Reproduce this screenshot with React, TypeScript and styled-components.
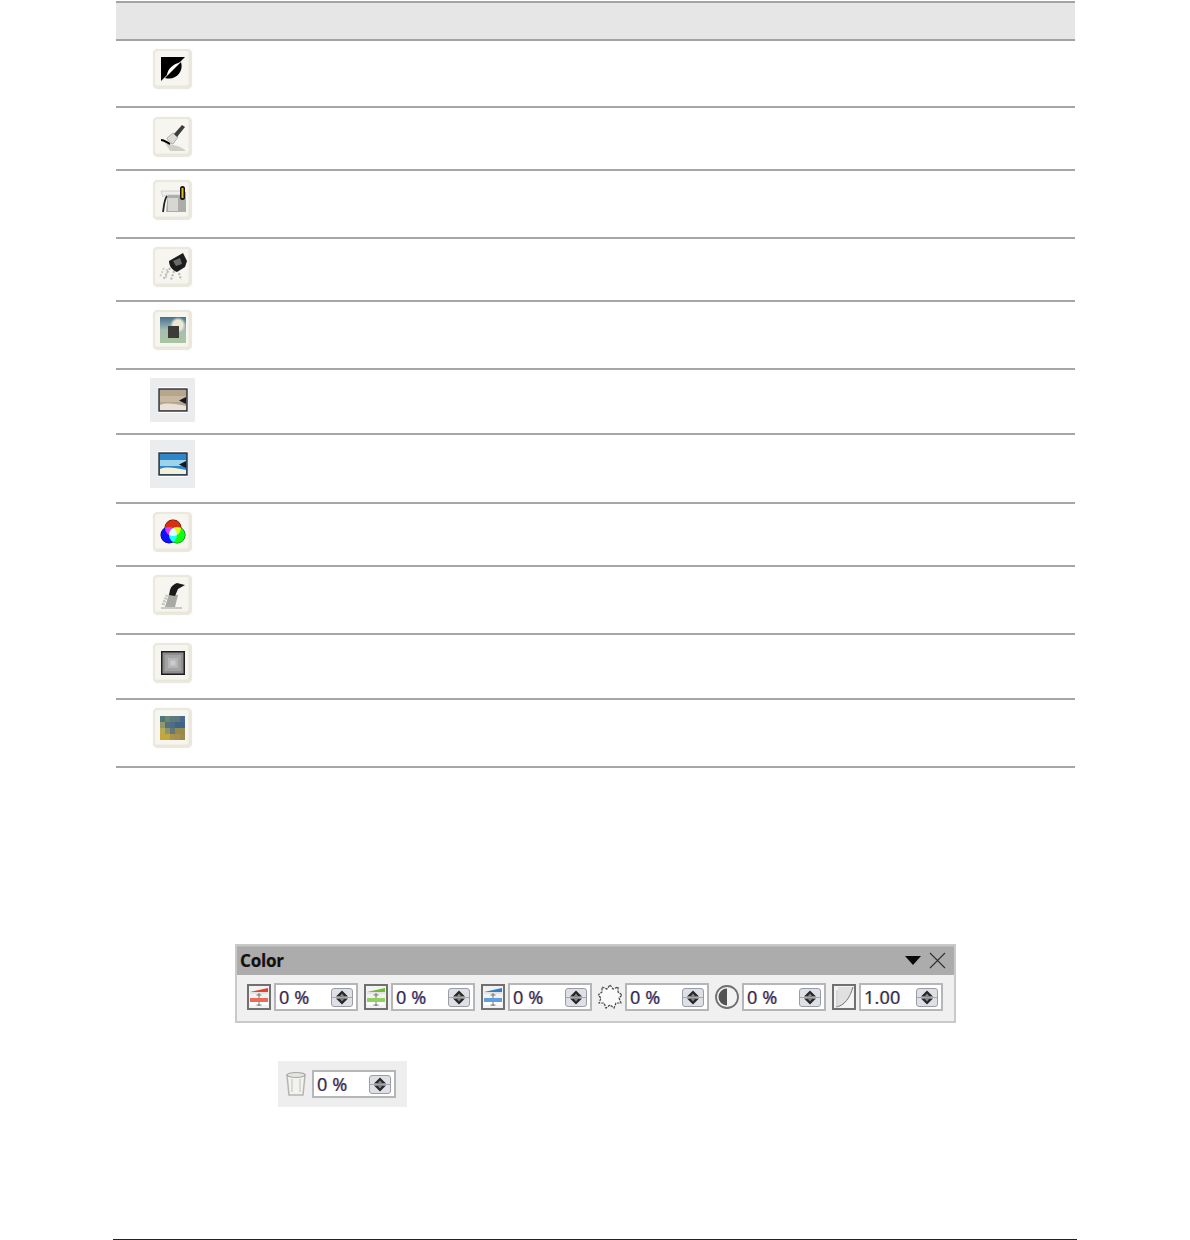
import React from 'react';
import styled, { createGlobalStyle } from 'styled-components';

const GlobalStyle = createGlobalStyle`
  html, body { margin: 0; padding: 0; background: #fff; }
  body { font-family: "Open Sans", "Liberation Sans", sans-serif; }
`;

const Page = styled.div`
  width: 1190px;
  height: 1240px;
  display: flex;
  flex-direction: column;
  overflow: hidden;
`;
const Table = styled.div`
  width: 959px;
  margin: 1px 0 0 116px;
  display: flex;
  flex-direction: column;
`;
const HeaderRow = styled.div`
  height: 36px;
  background: #e6e6e6;
  border-top: 2px solid #a3a3a3;
  border-bottom: 2px solid #a3a3a3;
`;
const Row = styled.div<{ $height: number; $pad: number }>`
  height: ${p => p.$height}px;
  box-sizing: border-box;
  padding-top: ${p => p.$pad}px;
  border-bottom: 2px solid #a6a6a6;
`;
const IconCell = styled.div`
  width: 113px;
  display: flex;
  justify-content: center;
`;
const ToolButton = styled.div`
  width: 39px;
  height: 40px;
  box-sizing: border-box;
  display: flex;
  align-items: center;
  justify-content: center;
  background: #f6f5ef;
  border: 2px solid #ebe9de;
  border-radius: 5px;
  box-shadow: inset -1px -1px 2px #e2e0d4, 0 0 1px #dcdacd;
  svg { filter: blur(0.5px); }
`;
const FlatTile = styled.div<{ $height: number }>`
  width: 45px;
  height: ${p => p.$height}px;
  display: flex;
  align-items: center;
  justify-content: center;
  background: #ebecee;
  svg { filter: blur(0.5px); }
`;
const Toolbar = styled.div`
  width: 721px;
  height: 79px;
  box-sizing: border-box;
  margin: 176px 0 0 235px;
  background: #f0f0f0;
  border: 2px solid #c9c9c9;
`;
const TitleBar = styled.div`
  height: 29px;
  background: #acacac;
  border-top: 1px solid #b8b8b8;
  box-sizing: border-box;
  display: flex;
  align-items: center;
  justify-content: space-between;
  padding: 0 8px 2px 3px;
`;
const Title = styled.span`
  font-family: "Open Sans", sans-serif;
  font-weight: 700;
  font-size: 17px;
  color: #101010;
  letter-spacing: -0.2px;
  text-shadow: -0.5px 0 rgba(200, 110, 0, 0.35), 0.5px 0 rgba(40, 60, 200, 0.35);
`;
const TitleActions = styled.div`
  display: flex;
  align-items: center;
  gap: 8px;
`;
const Controls = styled.div`
  display: flex;
  gap: 6px;
  padding: 8px 0 0 10px;
`;
const Control = styled.div`
  display: flex;
  align-items: center;
  gap: 3px;
`;
const SpinBox = styled.div`
  width: 84px;
  height: 28px;
  box-sizing: border-box;
  display: flex;
  align-items: center;
  justify-content: space-between;
  padding: 0 3px 0 3px;
  background: #fff;
  border: 2px solid #b4b6ba;
`;
const SpinValue = styled.span`
  font-family: "Open Sans", sans-serif;
  font-size: 18px;
  letter-spacing: 0.2px;
  color: #2a2a50;
  text-shadow: -0.6px 0 rgba(210, 110, 0, 0.4), 0.6px 0 rgba(50, 40, 220, 0.4);
`;
const SpinArrows = styled.svg`
  flex: none;
  display: block;
  filter: blur(0.3px);
`;
const SquareIcon = styled.div<{ $framed: boolean }>`
  width: 24px;
  height: 26px;
  box-sizing: border-box;
  display: flex;
  align-items: center;
  justify-content: center;
  border: ${p => (p.$framed ? '2px solid #707070' : 'none')};
  background: ${p => (p.$framed ? '#f2f2f2' : 'transparent')};
  svg { filter: blur(0.35px); }
`;
const OpacityPanel = styled.div`
  width: 129px;
  height: 46px;
  box-sizing: border-box;
  margin: 38px 0 0 278px;
  padding-left: 7px;
  display: flex;
  align-items: center;
  gap: 5px;
  background: #eeeeee;
`;
const FootRule = styled.div`
  width: 964px;
  height: 1px;
  margin: 132px 0 0 113px;
  background: #222;
`;
const ScreenCircle = styled.circle`
  mix-blend-mode: screen;
`;
const Isolated = styled.g`
  isolation: isolate;
`;

const Solarize = () => (
  <svg width="24" height="24" viewBox="0 0 24 24">
    <path d="M0 0H24L0 24Z" fill="#000" />
    <path d="M6 19C6 12 12 7 20 5Z" fill="#fff" />
    <path d="M20 5C23 14 15 24 4 21Z" fill="#000" />
  </svg>
);
const Brush = () => (
  <svg width="26" height="28" viewBox="0 0 26 28">
    <path d="M5 20C11 22 20 22 26 28H10Z" fill="#cfcfca" />
    <path d="M1 17C4 17 6 19 10 21" stroke="#000" strokeWidth="2.2" fill="none" />
    <path d="M7 15L13 10L18 14L13 21C10 20 8 18 7 15Z" fill="#dcdcd7" stroke="#999" strokeWidth="0.7" />
    <path d="M14 11L22 2L25 4L17 14Z" fill="#3c3c3c" />
  </svg>
);
const Relief = () => (
  <svg width="26" height="28" viewBox="0 0 26 28">
    <path d="M8 6H26V26H6Z" fill="#acacA8" />
    <path d="M1 5H22V9H8C5 9 4 10 3 11Z" fill="#eee" stroke="#bbb" strokeWidth="0.6" />
    <path d="M7 10C4 14 4 20 3 26" stroke="#222" strokeWidth="1.8" fill="none" />
    <rect x="8" y="12" width="10" height="13" fill="#d6d6d2" />
    <rect x="20" y="0" width="5" height="14" rx="2.5" fill="#111" />
    <rect x="21.5" y="2" width="2" height="10" fill="#e5b92c" />
  </svg>
);
const Spot = () => (
  <svg width="28" height="28" viewBox="0 0 28 28">
    <path d="M10 8L24 0L28 8L26 14L18 19C13 17 10 13 10 8Z" fill="#1c1c1c" />
    <path d="M14 8L21 5L23 11L17 13Z" fill="#6a6a6a" />
    <path d="M11 15L4 27M15 18L12 27M20 20L22 27" stroke="#b5b5b0" strokeWidth="2" strokeDasharray="2 1.5" />
    <path d="M5 15L1 24M8 16L7 26" stroke="#cfcfca" strokeWidth="2" strokeDasharray="2 1.5" />
  </svg>
);
const Smooth = () => (
  <svg width="26" height="26" viewBox="0 0 26 26">
    <defs>
      <linearGradient id="smooth-bg" x1="0" y1="0" x2="0" y2="1">
        <stop offset="0" stopColor="#47708f" />
        <stop offset="0.5" stopColor="#a7bdb4" />
        <stop offset="1" stopColor="#a9c6a0" />
      </linearGradient>
      <radialGradient id="smooth-sun">
        <stop offset="0.6" stopColor="#ece8d4" />
        <stop offset="1" stopColor="#ece8d4" stopOpacity="0" />
      </radialGradient>
    </defs>
    <rect width="26" height="26" fill="url(#smooth-bg)" />
    <circle cx="18" cy="8" r="8" fill="url(#smooth-sun)" />
    <rect x="8" y="9" width="11" height="12" fill="#3d3b38" />
  </svg>
);
const PhotoFrame = ({ sky, mid, ground }: { sky: string; mid: string; ground: string }) => (
  <svg width="32" height="28" viewBox="0 0 32 28">
    <rect x="1" y="1" width="30" height="26" fill="#fff" />
    <rect x="2" y="3" width="28" height="22" fill={sky} stroke="#2b2f38" strokeWidth="1.4" />
    <rect x="3" y="10" width="26" height="6" fill={mid} />
    <path d="M3 24V19C10 16 18 18 29 20V24Z" fill={ground} />
    <path d="M29 11L22 14.5L29 18Z" fill="#15181c" />
  </svg>
);
const RgbCircles = () => (
  <svg width="26" height="26" viewBox="0 0 26 26">
    <circle cx="13" cy="9" r="8.5" fill="#2a0a08" />
    <circle cx="9" cy="16" r="8.5" fill="#000030" />
    <circle cx="17" cy="16" r="8.5" fill="#002a08" />
    <Isolated>
      <ScreenCircle cx="13" cy="9" r="8" fill="#d83010" />
      <ScreenCircle cx="9" cy="16" r="8" fill="#1010ff" />
      <ScreenCircle cx="17" cy="16" r="8" fill="#10ff10" />
    </Isolated>
  </svg>
);
const Smear = () => (
  <svg width="26" height="28" viewBox="0 0 26 28">
    <path d="M5 26L9 13L18 14L15 26Z" fill="#a8a8a4" />
    <path d="M1 27H22" stroke="#c8c8c4" strokeWidth="2" />
    <path d="M3 24L7 14" stroke="#c4c4c0" strokeWidth="3" strokeDasharray="2 1" />
    <path d="M10 9C11 5 14 3 17 2L25 4L18 8L15 15L9 14Z" fill="#1a1a1a" />
  </svg>
);
const Sharpen = () => (
  <svg width="24" height="24" viewBox="0 0 24 24">
    <rect x="0.75" y="0.75" width="22.5" height="22.5" fill="#8e8e8e" stroke="#1e1e1e" strokeWidth="1.5" />
    <rect x="4" y="4" width="16" height="16" fill="#a3a3a3" />
    <rect x="7" y="7" width="10" height="10" fill="#b6b6b6" />
    <rect x="9.5" y="9.5" width="5" height="5" fill="#cccccc" />
  </svg>
);

const mosaic = [
  ['#4d7676', '#6b8574', '#5c7a78', '#5c7a78', '#476a88'],
  ['#93986c', '#55727c', '#4d6d88', '#3f6388', '#3f6388'],
  ['#b8a955', '#8c9173', '#66776f', '#96894f', '#96894f'],
  ['#c4a63f', '#c4a63f', '#a89450', '#a8904a', '#9a8a4c'],
];
const Mosaic = () => (
  <svg width="25" height="24" viewBox="0 0 25 24" shapeRendering="crispEdges">
    {mosaic.map((cols, y) =>
      cols.map((c, x) => <rect key={`${x}-${y}`} x={x * 5} y={y * 6} width="5" height="6" fill={c} />)
    )}
  </svg>
);

const rows = [
  { height: 67, pad: 8, icon: <Solarize /> },
  { height: 63, pad: 9, icon: <Brush /> },
  { height: 68, pad: 9, icon: <Relief /> },
  { height: 63, pad: 8, icon: <Spot /> },
  { height: 68, pad: 8, icon: <Smooth /> },
  { height: 65, pad: 8, tile: 44, icon: <PhotoFrame sky="#b7a68e" mid="#c9b9a2" ground="#e8e2d8" /> },
  { height: 69, pad: 5, tile: 48, icon: <PhotoFrame sky="#2f86c9" mid="#9ad4ea" ground="#f5efd9" /> },
  { height: 63, pad: 8, icon: <RgbCircles /> },
  { height: 68, pad: 8, icon: <Smear /> },
  { height: 65, pad: 8, icon: <Sharpen /> },
  { height: 68, pad: 8, icon: <Mosaic /> },
];

const Arrows = () => (
  <SpinArrows width="22" height="19" viewBox="0 0 22 19">
    <rect x="0.5" y="0.5" width="21" height="18" rx="2.5" fill="#dfe0e6" stroke="#9a9da8" />
    <path d="M1 9.5H21" stroke="#a5a8b2" />
    <path d="M11 2.5L17 8.5H5Z" fill="#262626" />
    <path d="M11 16.5L17 10.5H5Z" fill="#262626" />
    <path d="M11 5.5L13 8H9ZM11 13.5L13 11H9Z" fill="#8a8a8a" />
  </SpinArrows>
);

const Spin = ({ value }: { value: string }) => (
  <SpinBox>
    <SpinValue>{value}</SpinValue>
    <Arrows />
  </SpinBox>
);

const ChannelGlyph = ({ hi, lo }: { hi: string; lo: string }) => (
  <svg width="20" height="22" viewBox="0 0 20 22">
    <path d="M1 6L19 2V6Z" fill={hi} />
    <path d="M1 7H19" stroke="#d4d4d4" />
    <rect x="1" y="12" width="18" height="4" fill={lo} />
    <rect x="1" y="16" width="18" height="3" fill="#fff" />
    <path d="M10 7V12M10 16V20M7.5 9H12.5M7.5 19H12.5" stroke="#666" strokeWidth="0.9" />
  </svg>
);
const Burst = () => (
  <svg width="24" height="26" viewBox="0 0 24 26">
    <path
      d="M12 1L15 5L20 3L20 8L24 11L21 14L23 19L18 19L16 24L12 21L8 24L6 19L1 19L3 14L0 11L4 8L4 3L9 5Z"
      fill="#fafafa"
      stroke="#444"
      strokeWidth="1.2"
      strokeDasharray="2.5 1"
    />
  </svg>
);
const Contrast = () => (
  <svg width="24" height="26" viewBox="0 0 24 26">
    <circle cx="12" cy="13" r="11" fill="#f2f2f2" stroke="#707070" strokeWidth="1.8" />
    <path d="M12 4.5A8.5 8.5 0 0 0 12 21.5Z" fill="#50534f" />
  </svg>
);
const Curve = () => (
  <svg width="20" height="22" viewBox="0 0 20 22">
    <path d="M4 21C11 20 16 12 19 1H4Z" fill="#e0e0e0" />
    <path d="M4 21H19V1C16 12 11 20 4 21Z" fill="#f4f4f4" />
    <path d="M2 21C10 20 16 12 19 1" stroke="#777" fill="none" strokeWidth="1" />
    <path d="M3 21V4" stroke="#bdbdbd" />
  </svg>
);
const Beaker = () => (
  <svg width="22" height="26" viewBox="0 0 22 26">
    <path d="M2 4H20L18 24H4Z" fill="#f2f2f0" stroke="#b5b5b0" strokeWidth="1.5" />
    <ellipse cx="11" cy="4" rx="9" ry="2.5" fill="#e4e4e2" stroke="#a8a8a4" strokeWidth="1.2" />
    <path d="M7 8V21M15 8V21" stroke="#d0d0cc" strokeWidth="1.5" />
  </svg>
);
const DockArrow = () => (
  <svg width="16" height="9" viewBox="0 0 16 9">
    <path d="M0 0H16L8 9Z" fill="#0a0a0a" />
  </svg>
);
const CloseX = () => (
  <svg width="17" height="17" viewBox="0 0 17 17">
    <path d="M1 1L16 16M16 1L1 16" stroke="#333" strokeWidth="1.2" />
  </svg>
);

const controls = [
  { framed: true, glyph: <ChannelGlyph hi="#e8402c" lo="#ee6a58" />, value: '0 %' },
  { framed: true, glyph: <ChannelGlyph hi="#6cc030" lo="#92d060" />, value: '0 %' },
  { framed: true, glyph: <ChannelGlyph hi="#2f7fd0" lo="#5c9ede" />, value: '0 %' },
  { framed: false, glyph: <Burst />, value: '0 %' },
  { framed: false, glyph: <Contrast />, value: '0 %' },
  { framed: true, glyph: <Curve />, value: '1.00' },
];

export default function App() {
  return (
    <Page>
      <GlobalStyle />
      <Table>
        <HeaderRow />
        {rows.map((r, i) => (
          <Row key={i} $height={r.height} $pad={r.pad}>
            <IconCell>
              {r.tile ? <FlatTile $height={r.tile}>{r.icon}</FlatTile> : <ToolButton>{r.icon}</ToolButton>}
            </IconCell>
          </Row>
        ))}
      </Table>
      <Toolbar>
        <TitleBar>
          <Title>Color</Title>
          <TitleActions>
            <DockArrow />
            <CloseX />
          </TitleActions>
        </TitleBar>
        <Controls>
          {controls.map((c, i) => (
            <Control key={i}>
              <SquareIcon $framed={c.framed}>{c.glyph}</SquareIcon>
              <Spin value={c.value} />
            </Control>
          ))}
        </Controls>
      </Toolbar>
      <OpacityPanel>
        <Beaker />
        <Spin value="0 %" />
      </OpacityPanel>
      <FootRule />
    </Page>
  );
}
